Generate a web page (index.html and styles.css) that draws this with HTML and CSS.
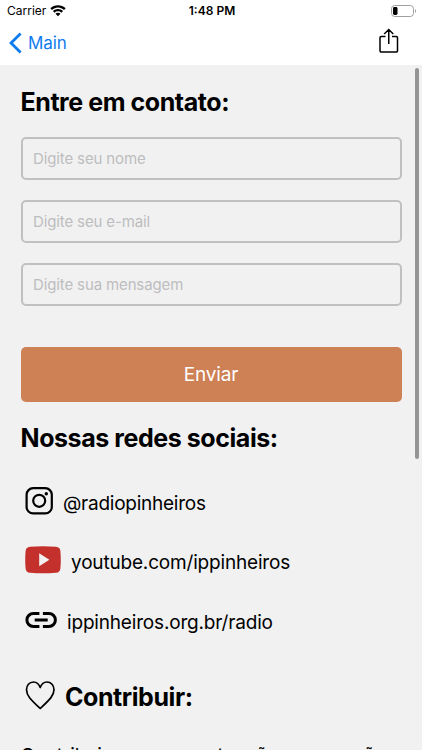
FILE: index.html
```html
<!DOCTYPE html>
<html lang="pt-BR">
<head>
    <meta charset="utf-8">
    <title>Contato</title>
    <link rel="stylesheet" href="styles.css">
</head>
<body>
    <div class="status">
        <div class="carrier">
            <span>Carrier</span>
            <svg width="16" height="12" viewBox="0 0 16 12">
                <path d="M8 0.3C5 0.3 2.3 1.4 0.3 3.3L2 5C3.6 3.5 5.7 2.6 8 2.6s4.4 0.9 6 2.4l1.7-1.7C13.7 1.4 11 0.3 8 0.3z"/>
                <path d="M8 4C6 4 4.2 4.8 2.9 6l1.7 1.7C5.5 6.8 6.7 6.3 8 6.3s2.5 0.5 3.4 1.4L13.1 6C11.8 4.8 10 4 8 4z"/>
                <path d="M8 7.7c-1 0-1.8 0.4-2.5 1L8 11.2l2.5-2.5C9.8 8.1 9 7.7 8 7.7z"/>
            </svg>
        </div>
        <span class="time">1:48 PM</span>
        <svg class="battery" width="26" height="12" viewBox="0 0 26 12">
            <rect x="0.5" y="0.5" width="22" height="11" rx="3.2" fill="none" stroke="#a0a0a0"/>
            <rect x="2" y="2" width="4.5" height="8" rx="1.4"/>
            <path d="M24 4v4c1.4-0.5 1.4-3.5 0-4z" fill="#a0a0a0"/>
        </svg>
    </div>

    <div class="navbar">
        <a class="back" href="#">
            <svg width="13" height="22" viewBox="0 0 13 22">
                <path d="M11.6 1.5L2 11l9.6 9.5" fill="none" stroke="#0f7bee" stroke-width="2.8"/>
            </svg>
            <span>Main</span>
        </a>
        <svg class="share" width="20" height="26" viewBox="0 0 20 26" fill="none" stroke="#000" stroke-width="1.5">
            <path d="M6.5 8.5H2.2a1.2 1.2 0 0 0-1.2 1.2v13.1a1.2 1.2 0 0 0 1.2 1.2h15.1a1.2 1.2 0 0 0 1.2-1.2V9.7a1.2 1.2 0 0 0-1.2-1.2H13M9.75 16V1.5M5.2 6l4.55-4.5L14.3 6"/>
        </svg>
    </div>

    <div class="content">
        <h2>Entre em contato:</h2>
        <form>
            <input type="text" placeholder="Digite seu nome">
            <input type="text" placeholder="Digite seu e-mail">
            <input type="text" placeholder="Digite sua mensagem">
            <button type="button">Enviar</button>
        </form>

        <h2>Nossas redes sociais:</h2>
        <div class="row instagram">
            <svg width="28" height="28" viewBox="0 0 28 28">
                <rect x="1.6" y="1.2" width="25.2" height="25.2" rx="6.5" fill="none" stroke="#000" stroke-width="2.2"/>
                <circle cx="14.2" cy="13.8" r="6" fill="none" stroke="#000" stroke-width="2.2"/>
                <circle cx="21.3" cy="6.8" r="1.7"/>
            </svg>
            <span>@radiopinheiros</span>
        </div>
        <div class="row youtube">
            <svg width="36" height="28" viewBox="0 0 36 28">
                <path d="M5 0.7Q18-0.3 31 0.7Q35 1 35.4 5Q36.2 14 35.4 22.5Q35 26.5 31 26.8Q18 27.8 5 26.8Q1 26.5 0.6 22.5Q-0.2 14 0.6 5Q1 1 5 0.7z" fill="#c4302b"/>
                <path d="M14.2 7.3v13l10.2-6.5z" fill="#f1f1f1"/>
            </svg>
            <span>youtube.com/ippinheiros</span>
        </div>
        <div class="row site">
            <svg width="32" height="16" viewBox="0 0 32 16" fill="none" stroke="#000" stroke-width="3">
                <path d="M14.4 1.5H8.4a6.5 6.5 0 0 0 0 13h6M17.9 1.5h6a6.5 6.5 0 0 1 0 13h-6M9.7 8h13"/>
            </svg>
            <span>ippinheiros.org.br/radio</span>
        </div>

        <div class="donate">
            <svg width="30" height="29" viewBox="0 0 30 29">
                <path d="M15.2 6.5C13.9 3 11.7 1 8.5 1C4.2 1 1.5 4.3 1.5 8.8C1.5 15 6.7 19.5 15.2 27.5C23.7 19.5 29 15 29 8.8C29 4.3 26.2 1 21.9 1C18.7 1 16.5 3 15.2 6.5z" fill="none" stroke="#000" stroke-width="1.7" stroke-linejoin="round"/>
            </svg>
            <h2>Contribuir:</h2>
        </div>
        <p>Contribui para a manutenção e expansão</p>
        <div class="scrollbar"></div>
    </div>
</body>
</html>
```
FILE: styles.css
```css
* {
    box-sizing: border-box;
}

body {
    margin: 0;
    height: 750px;
    overflow: hidden;
    display: flex;
    flex-direction: column;
    font-family: Inter, "Liberation Sans", sans-serif;
    background-color: #fff;
    color: #000;
}

svg {
    display: block;
    flex: none;
}

.status {
    display: grid;
    grid-template-columns: 1fr auto 1fr;
    align-items: center;
    height: 21px;
    padding: 0 5px 0 7px;
    font-size: 12px;
}

.carrier {
    display: flex;
    align-items: center;
    gap: 4px;
}

.time {
    font-weight: 600;
}

.battery {
    justify-self: end;
}

.navbar {
    display: flex;
    justify-content: space-between;
    height: 44px;
    padding: 7px 23px 0 9px;
}

.back {
    display: flex;
    align-items: center;
    gap: 6px;
    height: 30px;
    color: #0f7bee;
    font-size: 17px;
    letter-spacing: -0.1px;
    text-decoration: none;
}

.content {
    position: relative;
    flex: 1;
    overflow: hidden;
    padding: 22px 20.5px 0;
    background-color: #f1f1f1;
}

h2 {
    margin: 0;
    font-size: 25px;
    line-height: 30px;
    font-weight: 700;
    letter-spacing: -0.43px;
    white-space: nowrap;
}

form {
    display: flex;
    flex-direction: column;
    gap: 20px;
    margin: 20px 0 21px;
}

input {
    width: 100%;
    height: 43px;
    padding: 0 10.5px;
    border: 2px solid #c0c0c0;
    border-radius: 5px;
    background: transparent;
    font-family: inherit;
    font-size: 15px;
    letter-spacing: -0.13px;
}

input::placeholder {
    color: #bdbdbf;
}

button {
    height: 55px;
    margin-top: 21px;
    border: none;
    border-radius: 5px;
    background-color: #cd8155;
    color: #fff;
    font-family: inherit;
    font-size: 19px;
    letter-spacing: -0.2px;
}

.row {
    display: flex;
    align-items: center;
    gap: 10px;
    height: 28px;
    padding-left: 4.5px;
    font-size: 19px;
    letter-spacing: -0.18px;
    white-space: nowrap;
}

.row span,
.donate h2 {
    padding-top: 4px;
}

.instagram {
    margin-top: 34px;
    letter-spacing: -0.25px;
}

.youtube {
    margin-top: 31px;
}

.site {
    margin-top: 32px;
}

.donate {
    display: flex;
    align-items: center;
    gap: 10px;
    margin-top: 44px;
    padding-left: 4.5px;
}

p {
    margin: 32px 0 0;
    font-size: 19px;
    line-height: 24px;
    letter-spacing: -0.1px;
    white-space: nowrap;
}

.scrollbar {
    position: absolute;
    top: 3px;
    right: 3px;
    width: 4px;
    height: 391px;
    border-radius: 2px;
    background-color: #949494;
}
```
